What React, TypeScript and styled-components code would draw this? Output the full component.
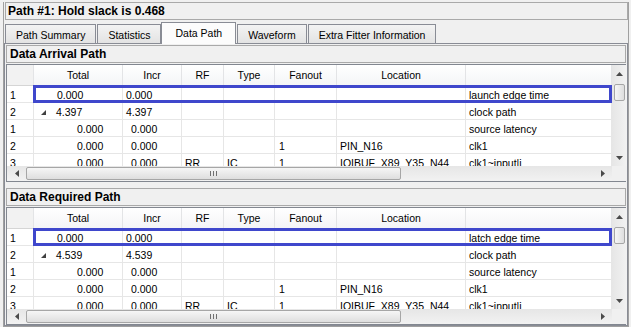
import styled, {createGlobalStyle, css} from 'styled-components'

const FONT = `'Liberation Sans', Arial, sans-serif`

const GlobalStyle = createGlobalStyle`
  html, body {
    margin: 0;
    padding: 0;
    background: #f0f0f0;
  }
  * {
    box-sizing: border-box;
  }
`

// ── Window chrome ──

const Window = styled.div`
  width: 631px;
  height: 327px;
  padding: 2px 2px 0 3px;
  background: #f0f0f0;
  font-family: ${FONT};
  color: #000;
  overflow: hidden;
`

const Frame = styled.div`
  height: 100%;
  display: flex;
  flex-direction: column;
  border: 1px solid #a0a0a0;
  border-top: none;
`

const TitleBar = styled.div`
  height: 18px;
  margin-left: 1px;
  padding-left: 2px;
  display: flex;
  align-items: center;
  border: 1px solid #a9a9a9;
  font-size: 12px;
  font-weight: 700;
`

// ── Tabs ──

const TabStrip = styled.div`
  height: 22px;
  margin-top: 2px;
  margin-bottom: -1px;
  padding-left: 1px;
  display: flex;
  align-items: flex-start;
  position: relative;
  z-index: 1;
`

const Tab = styled.div<{$active?: boolean}>`
  height: 19px;
  margin-top: 2px;
  margin-right: 1px;
  padding: 1px 10px 0;
  display: flex;
  align-items: center;
  border: 1px solid #898c95;
  border-bottom: none;
  background: linear-gradient(#f3f3f3, #e3e3e3);
  font-size: 10.5px;
  white-space: nowrap;
  ${(p) =>
    p.$active &&
    css`
      height: 22px;
      margin-top: 0;
      margin-left: -1px;
      padding: 0 13px 2px;
      background: #fcfcfc;
    `}
`

const Panel = styled.div`
  flex: 1;
  padding: 1px 1px 0;
  display: flex;
  flex-direction: column;
  border: 1px solid #898c95;
  background: #f0f0f0;
`

// ── Sections ──

const Section = styled.div<{$gap?: number}>`
  margin-top: ${(p) => p.$gap ?? 0}px;
  display: flex;
  flex-direction: column;
`

const SectionTitle = styled.div`
  height: 18px;
  margin-bottom: 1px;
  padding-left: 3px;
  display: flex;
  align-items: center;
  border: 1px solid #a9a9a9;
  font-size: 12px;
  font-weight: 700;
`

const GridFrame = styled.div`
  display: grid;
  grid-template-columns: 605px 15px;
  grid-template-rows: 101px 15px;
  border: 1px solid #828790;
  background: #fff;
`

const TableView = styled.div`
  overflow: hidden;
  display: flex;
  flex-direction: column;
`

const HeaderRow = styled.div`
  height: 21px;
  flex: none;
  display: flex;
  border-bottom: 1px solid #d5d5d5;
  background: linear-gradient(#ffffff, #f4f5f7);
`

const HeaderCell = styled.div<{$w: number; $corner?: boolean}>`
  width: ${(p) => p.$w}px;
  flex: none;
  border-right: 1px solid #e3e4e6;
  text-align: center;
  line-height: 20px;
  font-size: 10.5px;
  ${(p) => p.$corner && 'background: #f2f2f2;'}
`

const BodyRow = styled.div<{$selected?: boolean}>`
  height: 17px;
  flex: none;
  display: flex;
  position: relative;
  border-bottom: 1px solid #e6e6e6;
  ${(p) =>
    p.$selected &&
    css`
      &::after {
        content: '';
        position: absolute;
        top: -1px;
        bottom: -1px;
        left: 26px;
        right: 0;
        border: 3px solid #3f47cc;
        pointer-events: none;
      }
    `}
`

const Cell = styled.div<{$w: number; $pad?: number}>`
  width: ${(p) => p.$w}px;
  flex: none;
  display: flex;
  align-items: center;
  padding-top: 2px;
  padding-left: ${(p) => p.$pad ?? 3}px;
  border-right: 1px solid #e6e6e6;
  font-size: 10.5px;
  line-height: 14px;
  white-space: nowrap;
  overflow: hidden;
`

const TreeMark = styled.svg`
  width: 5px;
  height: 5px;
  margin-right: 10px;
  flex: none;
  fill: #404040;
`

// ── Scrollbars ──

const HScroll = styled.div`
  display: flex;
  align-items: stretch;
  background: linear-gradient(#e6e6e6, #f2f2f2);
`

const VScroll = styled.div`
  grid-row: 1;
  grid-column: 2;
  display: flex;
  flex-direction: column;
  background: linear-gradient(90deg, #e6e6e6, #f2f2f2);
`

const Corner = styled.div`
  background: #f0f0f0;
`

const ArrowButton = styled.div<{$vertical?: boolean}>`
  flex: none;
  ${(p) => (p.$vertical ? 'height: 17px;' : 'width: 19px;')}
  display: flex;
  align-items: center;
  justify-content: center;
  svg {
    fill: #4a4a4a;
  }
`

const Thumb = styled.div<{$vertical?: boolean}>`
  flex: none;
  display: flex;
  align-items: center;
  justify-content: center;
  border: 1px solid #a6a6a6;
  border-radius: 2px;
  ${(p) =>
    p.$vertical
      ? css`
          height: 17px;
          margin: 2px 2px 0;
          background: linear-gradient(90deg, #f6f6f6, #dedede);
        `
      : css`
          width: 375px;
          margin: 1px 0;
          background: linear-gradient(#f6f6f6, #dedede);
        `}
`

const Track = styled.div`
  flex: 1;
`

const Grip = styled.svg`
  width: 7px;
  height: 5px;
  fill: #707070;
`

// ── Data ──

interface Row {
  n: string
  total: string
  incr: string
  rf?: string
  type?: string
  fanout?: string
  location?: string
  desc: string
  level: number
  tree?: boolean
  selected?: boolean
}

const columns = [
  {key: 'n', title: '', width: 27},
  {key: 'total', title: 'Total', width: 89},
  {key: 'incr', title: 'Incr', width: 59},
  {key: 'rf', title: 'RF', width: 42},
  {key: 'type', title: 'Type', width: 51},
  {key: 'fanout', title: 'Fanout', width: 62},
  {key: 'location', title: 'Location', width: 129},
  {key: 'desc', title: '', width: 146},
]

const makeRows = (clockTotal: string, edge: string): Row[] => [
  {n: '1', total: '0.000', incr: '0.000', desc: edge, level: 0, selected: true},
  {n: '2', total: clockTotal, incr: clockTotal, desc: 'clock path', level: 0, tree: true},
  {n: '1', total: '0.000', incr: '0.000', desc: 'source latency', level: 1},
  {n: '2', total: '0.000', incr: '0.000', fanout: '1', location: 'PIN_N16', desc: 'clk1', level: 1},
  {
    n: '3',
    total: '0.000',
    incr: '0.000',
    rf: 'RR',
    type: 'IC',
    fanout: '1',
    location: 'IOIBUF_X89_Y35_N44',
    desc: 'clk1~input|i',
    level: 1,
  },
]

const sections = [
  {title: 'Data Arrival Path', rows: makeRows('4.397', 'launch edge time')},
  {title: 'Data Required Path', rows: makeRows('4.539', 'latch edge time')},
]

const tabs = ['Path Summary', 'Statistics', 'Data Path', 'Waveform', 'Extra Fitter Information']

// ── Components ──

function Arrow({dir}: {dir: 'up' | 'down' | 'left' | 'right'}) {
  const pts = {
    up: '0,4 7,4 3.5,0',
    down: '0,0 7,0 3.5,4',
    left: '4,0 4,7 0,3.5',
    right: '0,0 0,7 4,3.5',
  }[dir]
  const vertical = dir === 'up' || dir === 'down'
  return (
    <svg width={vertical ? 7 : 4} height={vertical ? 4 : 7} viewBox={vertical ? '0 0 7 4' : '0 0 4 7'}>
      <polygon points={pts} />
    </svg>
  )
}

function PathGrid({rows}: {rows: Row[]}) {
  const w = (k: string) => columns.find((c) => c.key === k)!.width
  return (
    <GridFrame>
      <TableView>
        <HeaderRow>
          {columns.map((c, i) => (
            <HeaderCell key={c.key} $w={c.width} $corner={i === 0}>
              {c.title}
            </HeaderCell>
          ))}
        </HeaderRow>
        {rows.map((r, i) => (
          <BodyRow key={i} $selected={r.selected}>
            <Cell $w={w('n')}>{r.n}</Cell>
            <Cell $w={w('total')} $pad={r.tree ? 7 : r.level ? 43 : 23}>
              {r.tree && (
                <TreeMark viewBox="0 0 5 5">
                  <polygon points="5,0 5,5 0,5" />
                </TreeMark>
              )}
              {r.total}
            </Cell>
            <Cell $w={w('incr')} $pad={r.level ? 8 : 3}>
              {r.incr}
            </Cell>
            <Cell $w={w('rf')}>{r.rf}</Cell>
            <Cell $w={w('type')}>{r.type}</Cell>
            <Cell $w={w('fanout')} $pad={4}>
              {r.fanout}
            </Cell>
            <Cell $w={w('location')}>{r.location}</Cell>
            <Cell $w={w('desc')}>{r.desc}</Cell>
          </BodyRow>
        ))}
      </TableView>
      <VScroll>
        <ArrowButton $vertical>
          <Arrow dir="up" />
        </ArrowButton>
        <Thumb $vertical />
        <Track />
        <ArrowButton $vertical>
          <Arrow dir="down" />
        </ArrowButton>
      </VScroll>
      <HScroll>
        <ArrowButton>
          <Arrow dir="left" />
        </ArrowButton>
        <Thumb>
          <Grip viewBox="0 0 7 5">
            <rect x="0" y="0" width="1" height="5" />
            <rect x="3" y="0" width="1" height="5" />
            <rect x="6" y="0" width="1" height="5" />
          </Grip>
        </Thumb>
        <Track />
        <ArrowButton>
          <Arrow dir="right" />
        </ArrowButton>
      </HScroll>
      <Corner />
    </GridFrame>
  )
}

export default function App() {
  return (
    <>
      <GlobalStyle />
      <Window>
        <Frame>
          <TitleBar>Path #1: Hold slack is 0.468</TitleBar>
          <TabStrip>
            {tabs.map((t) => (
              <Tab key={t} $active={t === 'Data Path'}>
                {t}
              </Tab>
            ))}
          </TabStrip>
          <Panel>
            {sections.map((s, i) => (
              <Section key={s.title} $gap={i ? 6 : 0}>
                <SectionTitle>{s.title}</SectionTitle>
                <PathGrid rows={s.rows} />
              </Section>
            ))}
          </Panel>
        </Frame>
      </Window>
    </>
  )
}
